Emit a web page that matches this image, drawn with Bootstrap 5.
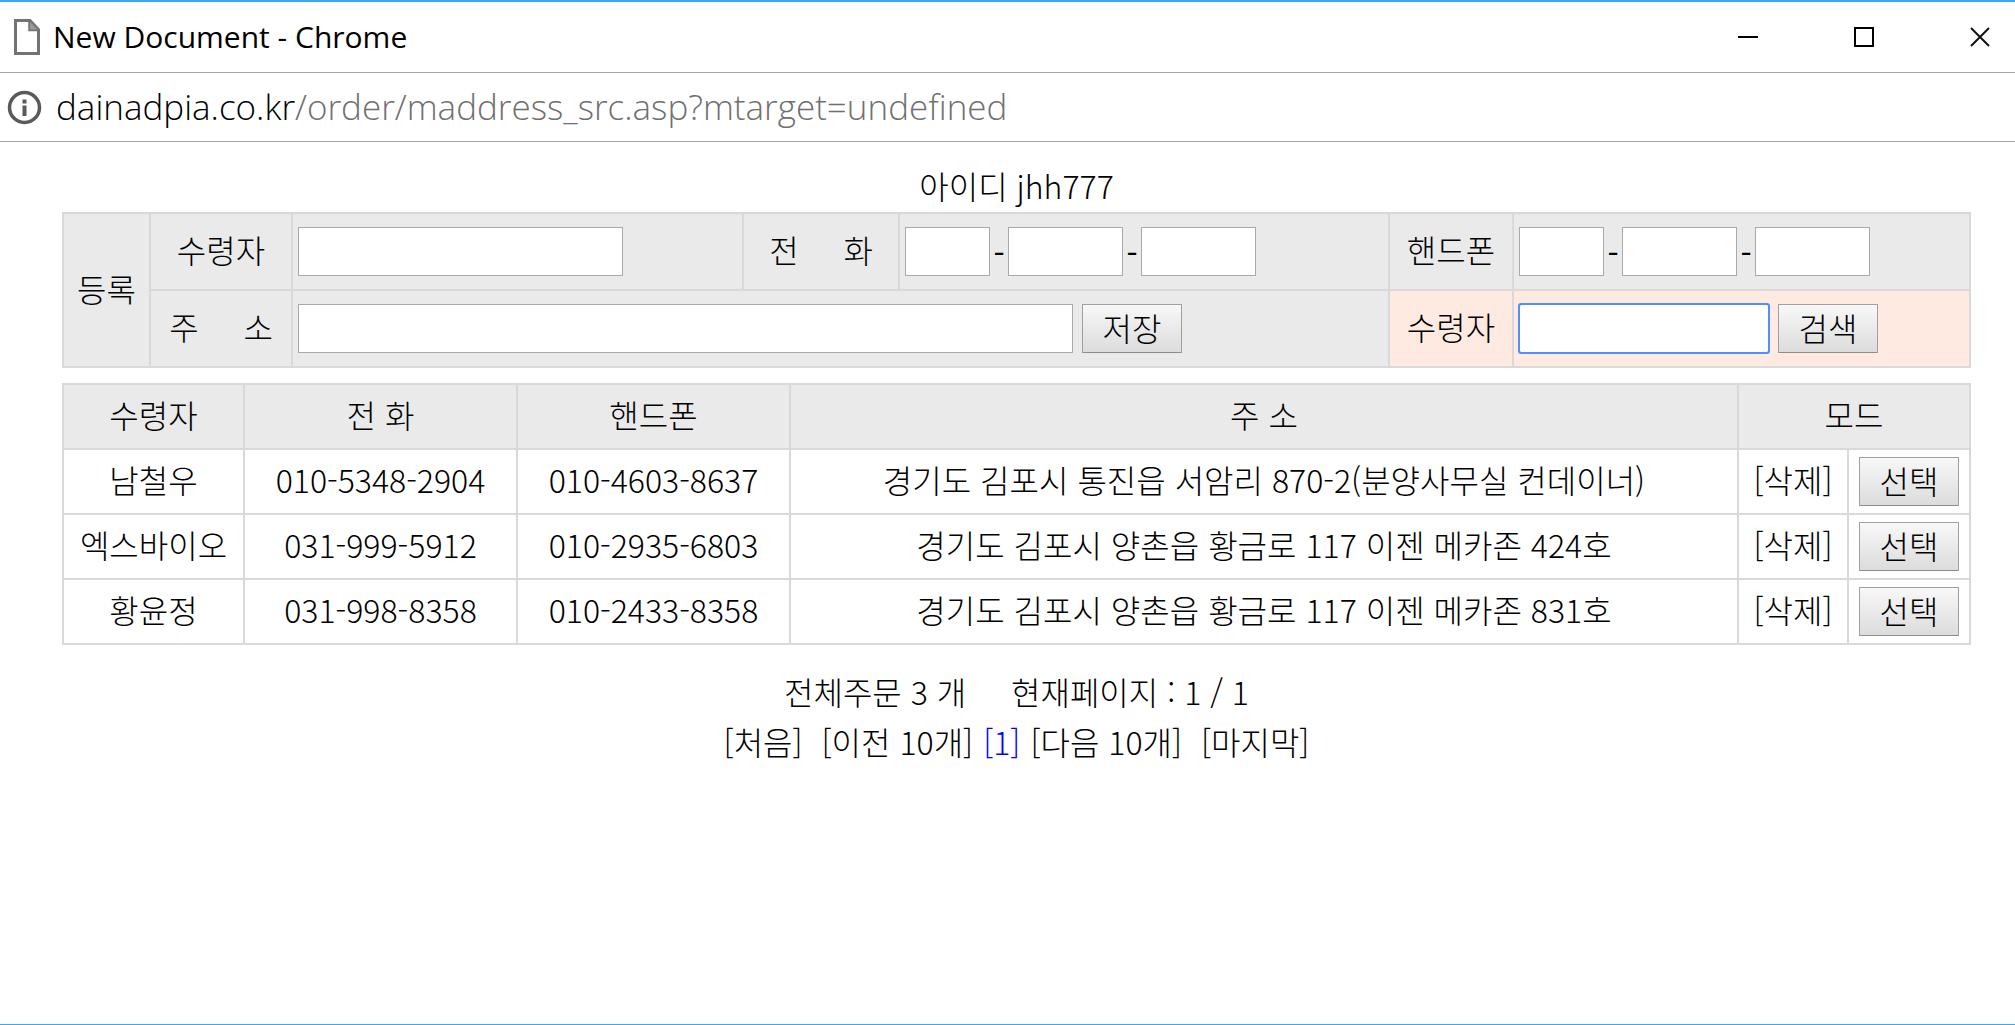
<!DOCTYPE html>
<html lang="ko">
<head>
<meta charset="utf-8">
<meta name="viewport" content="width=device-width, initial-scale=1">
<title>New Document</title>
<link rel="stylesheet" href="https://cdn.jsdelivr.net/npm/bootstrap@5.3.0/dist/css/bootstrap.min.css">
<style>
  :root { --line: #d9d9d9; --shade: #eaeaea; --frame: #3aaaf0; }
  body { font-family: "Noto Sans CJK KR", sans-serif; font-size: 32px; font-weight: 300; line-height: 40px; color: #000; background: #fff; }
  .popup { border-top: 2px solid var(--frame); border-bottom: 1px solid var(--frame); }
  .titlebar, .urlbar { font-family: "Open Sans", "Noto Sans", sans-serif; font-weight: 400; border-bottom: 1px solid #a6a6a6; white-space: nowrap; }
  .titlebar { height: 71px; padding-left: 13px; font-size: 30px; }
  .urlbar { height: 69px; padding-left: 7px; font-size: 35px; font-weight: 300; }
  .urlbar .path { color: #707070; }
  .urlbar .address { margin-left: 14px; }
  .winbtn { width: 116px; height: 66px; padding: 0; border: 0; background: none; }
  .winbtn:last-child { width: 93px; padding-left: 23px; }
  .content { padding: 23px 44px 0 62px; }
  .grid { table-layout: fixed; width: 100%; border-collapse: collapse; margin: 0; }
  .grid th, .grid td { border: 2px solid var(--line); padding: 0 5px; font-weight: inherit; text-align: center; vertical-align: middle; white-space: nowrap; }
  .grid th, .book td:not(:last-child) { padding-bottom: 5px; }
  .entry { background: var(--shade); margin-top: 7px; }
  .entry tr { height: 77px; }
  .entry .find { background: #ffeae1; }
  .fields { gap: 9px; }
  .book { margin-top: 15px; }
  .book tr { height: 65px; }
  .book thead { background: var(--shade); }
  .box { height: 49px; border: 1px solid #a9a9a9; border-radius: 0; background: #fff; padding: 2px 4px; min-width: 0; }
  .w-name { width: 325px; }
  .w-addr { width: 775px; }
  .w-find { width: 250px; }
  .w-area { width: 85px; }
  .w-num { width: 115px; }
  .box.active, .box:focus { outline: 2px solid #4d90fe; outline-offset: -1px; border-color: #4d90fe; border-radius: 2px; }
  .dash { width: 18px; text-align: center; font-weight: 400; }
  .push { width: 100px; height: 49px; padding: 0 0 3px; border: 1px solid #a0a0a0; border-bottom-color: #8c8c8c; border-radius: 1px; background: linear-gradient(#f8f8f8, #dcdcdc); color: #000; font-weight: inherit; line-height: 40px; }
  .plain { color: #000; text-decoration: none; }
  .current { color: #00f; text-decoration: none; }
  .totals { margin-top: 21px; }
  .totals, .pager { line-height: 50px; }
  .pager a { padding: 0 5px; }
</style>
<script src="https://cdn.jsdelivr.net/npm/bootstrap@5.3.0/dist/js/bootstrap.bundle.min.js"></script>
</head>
<body>
<div class="popup min-vh-100 d-flex flex-column">
  <header>
    <div class="titlebar d-flex align-items-center">
      <svg width="28" height="36" viewBox="0 0 28 36" fill="none" stroke="#737373" stroke-width="3" aria-hidden="true"><path d="M2.500 1.500H17L25.500 10.500V34.500H2.500Z"/><path d="M16.500 2V11H25" stroke-width="2.500"/><path d="M17 3L24.500 10.500H17Z" fill="#999" stroke="none"/></svg>
      <span class="ms-2 ps-1">New Document - Chrome</span>
      <div class="ms-auto d-flex">
        <button class="winbtn" type="button" aria-label="Minimize"><svg width="20" height="20" stroke="#000" stroke-width="2" class="d-block mx-auto"><path d="M0 10H20"/></svg></button>
        <button class="winbtn" type="button" aria-label="Maximize"><svg width="20" height="20" fill="none" stroke="#000" stroke-width="2" class="d-block mx-auto"><rect x="1" y="1" width="18" height="18"/></svg></button>
        <button class="winbtn" type="button" aria-label="Close"><svg width="20" height="20" stroke="#111" stroke-width="2" class="d-block mx-auto"><path d="M1 1L19 19M19 1L1 19"/></svg></button>
      </div>
    </div>
    <div class="urlbar d-flex align-items-center">
      <svg width="35" height="35" viewBox="0 0 35 35" aria-hidden="true"><circle cx="17.500" cy="17.500" r="15" fill="none" stroke="#5a5a5a" stroke-width="3.500"/><path d="M15.500 9.500h4v4h-4zM15.500 15.500h4v10.500h-4z" fill="#5a5a5a"/></svg>
      <span class="address">dainadpia.co.kr<span class="path">/order/maddress_src.asp?mtarget=undefined</span></span>
    </div>
  </header>

  <main class="content text-center">
    <div>아이디 jhh777</div>

    <form onsubmit="return false">
      <table class="grid entry">
        <colgroup><col style="width:87px"><col style="width:142px"><col><col style="width:156px"><col style="width:490px"><col style="width:124px"><col style="width:457px"></colgroup>
        <tbody>
          <tr>
            <th rowspan="2" scope="rowgroup">등록</th>
            <th scope="row"><label for="name">수령자</label></th>
            <td><div class="d-flex"><input class="box w-name" id="name" type="text"></div></td>
            <th scope="row"><label for="tel1">전 &nbsp; &nbsp; 화</label></th>
            <td><div class="d-flex align-items-center"><input class="box w-area" id="tel1" type="text"><span class="dash">-</span><input class="box w-num" type="text" aria-label="전화 2"><span class="dash">-</span><input class="box w-num" type="text" aria-label="전화 3"></div></td>
            <th scope="row"><label for="hp1">핸드폰</label></th>
            <td><div class="d-flex align-items-center"><input class="box w-area" id="hp1" type="text"><span class="dash">-</span><input class="box w-num" type="text" aria-label="핸드폰 2"><span class="dash">-</span><input class="box w-num" type="text" aria-label="핸드폰 3"></div></td>
          </tr>
          <tr>
            <th scope="row"><label for="addr">주 &nbsp; &nbsp; 소</label></th>
            <td colspan="3"><div class="fields d-flex"><input class="box w-addr" id="addr" type="text"><button class="push" type="button">저장</button></div></td>
            <th class="find" scope="row"><label for="find">수령자</label></th>
            <td class="find"><div class="fields d-flex"><input class="box w-find active" id="find" type="text"><button class="push" type="submit">검색</button></div></td>
          </tr>
        </tbody>
      </table>
    </form>

    <table class="grid book">
      <colgroup><col style="width:181px"><col style="width:273px"><col style="width:273px"><col><col style="width:110px"><col style="width:122px"></colgroup>
      <thead>
        <tr><th scope="col">수령자</th><th scope="col">전 화</th><th scope="col">핸드폰</th><th scope="col">주 소</th><th scope="col" colspan="2">모드</th></tr>
      </thead>
      <tbody>
        <tr><td>남철우</td><td>010-5348-2904</td><td>010-4603-8637</td><td>경기도 김포시 통진읍 서암리 870-2(분양사무실 컨데이너)</td><td><a class="plain" href="#">[삭제]</a></td><td><button class="push d-block mx-auto" type="button">선택</button></td></tr>
        <tr><td>엑스바이오</td><td>031-999-5912</td><td>010-2935-6803</td><td>경기도 김포시 양촌읍 황금로 117 이젠 메카존 424호</td><td><a class="plain" href="#">[삭제]</a></td><td><button class="push d-block mx-auto" type="button">선택</button></td></tr>
        <tr><td>황윤정</td><td>031-998-8358</td><td>010-2433-8358</td><td>경기도 김포시 양촌읍 황금로 117 이젠 메카존 831호</td><td><a class="plain" href="#">[삭제]</a></td><td><button class="push d-block mx-auto" type="button">선택</button></td></tr>
      </tbody>
    </table>

    <div class="totals">전체주문 3 개 &nbsp; &nbsp; 현재페이지 : 1 / 1</div>
    <nav class="pager" aria-label="페이지"><a class="plain" href="#">[처음]</a> <a class="plain" href="#">[이전 10개]</a><a class="current" href="#">[1]</a><a class="plain" href="#">[다음 10개]</a> <a class="plain" href="#">[마지막]</a></nav>
  </main>
</div>
</body>
</html>
